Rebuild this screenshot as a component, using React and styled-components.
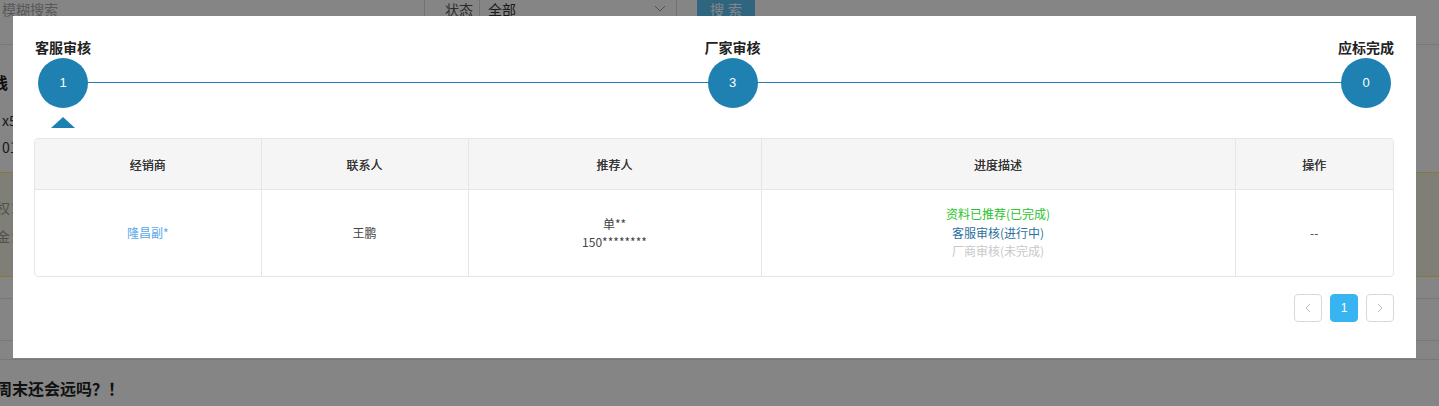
import React from 'react';
import styled, { createGlobalStyle } from 'styled-components';

const GlobalStyle = createGlobalStyle`
    html, body {
        margin: 0;
        padding: 0;
        background: #fff;
        overflow: hidden;
        font-family: "Noto Sans CJK SC", "Liberation Sans", sans-serif;
    }
`;

const MAIN = '#1f80b2';

/* ---------- page behind the dialog ---------- */

const Page = styled.div`
    width: 1439px;
    height: 406px;
    overflow: hidden;
    color: #333;
`;

const TopBar = styled.div`
    display: flex;
    align-items: flex-start;
    height: 45px;
    border-bottom: 1px solid #e6e6e6;
    box-sizing: border-box;
`;

const SearchInput = styled.div`
    width: 425px;
    height: 30px;
    margin-top: -6px;
    padding-left: 2px;
    box-sizing: border-box;
    border-right: 1px solid #ddd;
    font-size: 14px;
    line-height: 30px;
    color: #aaa;
`;

const FieldLabel = styled.div`
    margin: -6px 6px 0 20px;
    font-size: 14px;
    line-height: 30px;
    color: #555;
`;

const Select = styled.div`
    display: flex;
    align-items: center;
    justify-content: space-between;
    width: 198px;
    height: 30px;
    margin-top: -6px;
    padding: 0 10px 0 8px;
    box-sizing: border-box;
    border-left: 1px solid #ddd;
    border-right: 1px solid #ddd;
    font-size: 14px;
    color: #333;
`;

const SearchButton = styled.div`
    width: 58px;
    height: 30px;
    margin: -6px 0 0 20px;
    border-radius: 3px;
    background: #5cc2f6;
    color: #fff;
    font-size: 14px;
    line-height: 30px;
    text-align: center;
    letter-spacing: 4px;
    text-indent: 4px;
`;

const Body = styled.div`
    margin-left: -40px;
`;

const Title = styled.div`
    margin-top: 26px;
    font-size: 16px;
    font-weight: bold;
    line-height: 22px;
    color: #222;
`;

const InfoLine = styled.div`
    margin-top: ${p => p.$gap}px;
    font-size: 14px;
    line-height: 18px;
    color: #333;
`;

const NoticeBox = styled.div`
    margin-top: 16px;
    height: 105px;
    padding: 20px 0 0 22px;
    box-sizing: border-box;
    border-top: 1px solid #ffe86a;
    border-bottom: 1px solid #ffe86a;
    background: #f4f4e5;
    font-size: 14px;
    line-height: 29px;
    color: #999;
`;

const RuleRow = styled.div`
    height: ${p => p.$h}px;
    border-bottom: 1px solid #e6e6e6;
`;

const Footer = styled.div`
    margin: 16px 0 0 -4px;
    font-size: 16px;
    font-weight: bold;
    color: #222;
`;

/* ---------- dialog ---------- */

const Mask = styled.div`
    position: fixed;
    inset: 0;
    background: rgba(0, 0, 0, 0.48);
    padding: 16px 0 0 13px;
    box-sizing: border-box;
`;

const Dialog = styled.div`
    width: 1403px;
    background: #fff;
    padding: 22px 22px 36px 21px;
    box-sizing: border-box;
`;

const Steps = styled.div`
    position: relative;
    display: flex;
    justify-content: space-between;
    align-items: flex-start;
    padding-left: 1px;

    &::before {
        content: '';
        position: absolute;
        left: 30px;
        right: 30px;
        top: 44px;
        height: 1px;
        background: ${MAIN};
    }
`;

const Step = styled.div`
    position: relative;
    display: flex;
    flex-direction: column;
    align-items: center;
    margin-left: ${p => p.$shift || 0}px;
`;

const StepLabel = styled.div`
    font-size: 14px;
    font-weight: bold;
    line-height: 18px;
    color: #222;
    white-space: nowrap;
`;

const StepCircle = styled.div`
    width: 50px;
    height: 50px;
    margin-top: 2px;
    border-radius: 50%;
    background: ${MAIN};
    color: #fff;
    font-size: 13px;
    line-height: 50px;
    text-align: center;
    font-family: "Liberation Sans", sans-serif;
`;

const Pointer = styled.div`
    width: 0;
    height: 0;
    margin-top: 9px;
    border-left: 12px solid transparent;
    border-right: 12px solid transparent;
    border-bottom: 11px solid ${p => (p.$visible ? MAIN : 'transparent')};
`;

const TableWrap = styled.div`
    margin-top: 10px;
    border: 1px solid #e6e6e6;
    border-radius: 4px;
    overflow: hidden;
`;

const Table = styled.table`
    width: 100%;
    border-collapse: collapse;
    table-layout: fixed;
    font-size: 12px;
`;

const Th = styled.th`
    height: 50px;
    padding: 0;
    background: #f5f5f5;
    border-left: 1px solid #e6e6e6;
    border-bottom: 1px solid #e6e6e6;
    font-weight: normal;
    color: #333;
    text-shadow: 0 0 0.3px #333;

    &:first-child {
        border-left: none;
    }
`;

const Td = styled.td`
    height: 86px;
    padding: 0;
    border-left: 1px solid #e6e6e6;
    text-align: center;
    color: ${p => p.$color || '#444'};
    line-height: 18px;

    &:first-child {
        border-left: none;
    }
`;

const Progress = styled.div`
    color: ${p => p.$color};
    line-height: 18.5px;
`;

const Pager = styled.div`
    display: flex;
    justify-content: flex-end;
    gap: 8px;
    margin-top: 17px;
`;

const PageButton = styled.div`
    width: 28px;
    height: 28px;
    box-sizing: border-box;
    border-radius: 4px;
    border: 1px solid ${p => (p.$active ? '#38b4f2' : '#d9d9d9')};
    background: ${p => (p.$active ? '#38b4f2' : '#fff')};
    color: ${p => (p.$active ? '#fff' : '#bbb')};
    display: flex;
    align-items: center;
    justify-content: center;
    font-size: 12px;
    font-family: "Liberation Sans", sans-serif;
`;

const Chevron = ({ dir }) => (
    <svg width="8" height="10" viewBox="0 0 8 10">
        <path d={dir === 'left' ? 'M6 1 L2 5 L6 9' : 'M2 1 L6 5 L2 9'} fill="none" stroke="#bbb" strokeWidth="1" />
    </svg>
);

const steps = [
    { label: '客服审核', count: 1, active: true },
    { label: '厂家审核', count: 3, shift: 36 },
    { label: '应标完成', count: 0 },
];

const columns = [
    { title: '经销商', width: 226 },
    { title: '联系人', width: 207 },
    { title: '推荐人', width: 293 },
    { title: '进度描述', width: 474 },
    { title: '操作' },
];

const App = () => {
    return (
        <>
            <GlobalStyle />
            <Page>
                <TopBar>
                    <SearchInput>模糊搜索</SearchInput>
                    <FieldLabel>状态</FieldLabel>
                    <Select>
                        <span>全部</span>
                        <svg width="12" height="8" viewBox="0 0 12 8">
                            <path d="M1 1 L6 6 L11 1" fill="none" stroke="#999" strokeWidth="1" />
                        </svg>
                    </Select>
                    <SearchButton>搜索</SearchButton>
                </TopBar>
                <Body>
                    <Title>仓库栈</Title>
                    <InfoLine $gap={18}>规格：x50</InfoLine>
                    <InfoLine $gap={9}>日期：01</InfoLine>
                    <NoticeBox>
                        <div>授权：</div>
                        <div>押金：</div>
                    </NoticeBox>
                    <RuleRow $h={21} />
                    <RuleRow $h={41} />
                    <RuleRow $h={18} />
                </Body>
                <Footer>周末还会远吗？！</Footer>
            </Page>

            <Mask>
                <Dialog>
                    <Steps>
                        {steps.map(s => (
                            <Step key={s.label} $shift={s.shift}>
                                <StepLabel>{s.label}</StepLabel>
                                <StepCircle>{s.count}</StepCircle>
                                <Pointer $visible={s.active} />
                            </Step>
                        ))}
                    </Steps>

                    <TableWrap>
                        <Table>
                            <colgroup>
                                {columns.map(c => (
                                    <col key={c.title} style={c.width ? { width: c.width } : undefined} />
                                ))}
                            </colgroup>
                            <thead>
                                <tr>
                                    {columns.map(c => <Th key={c.title}>{c.title}</Th>)}
                                </tr>
                            </thead>
                            <tbody>
                                <tr>
                                    <Td $color="#5aa8ec">隆昌副*</Td>
                                    <Td>王鹏</Td>
                                    <Td>
                                        <div>单**</div>
                                        <div>150********</div>
                                    </Td>
                                    <Td>
                                        <Progress $color="#2bc22b">资料已推荐(已完成)</Progress>
                                        <Progress $color="#2a6f9e">客服审核(进行中)</Progress>
                                        <Progress $color="#c8c8c8">厂商审核(未完成)</Progress>
                                    </Td>
                                    <Td>--</Td>
                                </tr>
                            </tbody>
                        </Table>
                    </TableWrap>

                    <Pager>
                        <PageButton><Chevron dir="left" /></PageButton>
                        <PageButton $active>1</PageButton>
                        <PageButton><Chevron dir="right" /></PageButton>
                    </Pager>
                </Dialog>
            </Mask>
        </>
    );
};

export default App;
